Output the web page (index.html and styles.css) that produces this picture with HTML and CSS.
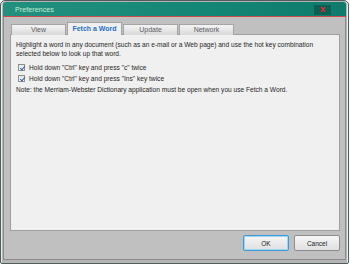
FILE: index.html
```html
<html>
  <head>
    <meta name="viewport" content="width=device-width,initial-scale=1">
    <link rel="stylesheet" href="styles.css">
  </head>

  <body>
    <div class="window">
      <div class="titlebar">
        <span class="title">Preferences</span>
        <span class="close">X</span>
      </div>

      <div class="frame">
        <div class="tabs">
          <div class="tab">View</div>
          <div class="tab active">Fetch a Word</div>
          <div class="tab">Update</div>
          <div class="tab">Network</div>
        </div>

        <div class="panel">
          <p class="intro">Highlight a word in any document (such as an e-mail or a Web page) and use the hot key combination selected below to look up that word.</p>
          <div class="option">
            <input type="checkbox" id="ctrl_c" checked>
            <label for="ctrl_c">Hold down "Ctrl" key and press "c" twice</label>
          </div>
          <div class="option">
            <input type="checkbox" id="ctrl_ins" checked>
            <label for="ctrl_ins">Hold down "Ctrl" key and press "Ins" key twice</label>
          </div>
          <p class="note">Note: the Merriam-Webster Dictionary application must be open when you use Fetch a Word.</p>
        </div>

        <div class="actions">
          <button class="btn default">OK</button>
          <button class="btn">Cancel</button>
        </div>
      </div>
    </div>
  </body>
</html>
```

FILE: styles.css
```css
body {
    margin: 0;
    background: #ffffff;
    font-family: 'Liberation Sans', Arial, sans-serif;
}

.window {
    width: 349px;
    height: 264px;
    box-sizing: border-box;
    border: 1px solid #505c5c;
    border-radius: 5px 5px 2px 2px;
    background: #b4b4b4;
    padding: 1px 2px 3px 2px;
    display: flex;
    flex-direction: column;
    box-shadow: inset 1px 0 0 #e8eeee, inset -1px 0 0 #e8eeee;
}

.titlebar {
    height: 14px;
    display: flex;
    align-items: center;
    justify-content: space-between;
    padding: 0 15px 0 12px;
    background: linear-gradient(to right, #23907e, #148676 60%, #0f7a6c);
    border-bottom: 1px solid #d24b4b;
    border-radius: 3px 3px 0 0;
}

.title {
    font-size: 7px;
    color: #c6efd6;
    letter-spacing: 0.1px;
}

.close {
    width: 17px;
    height: 10px;
    margin-top: 1px;
    background: #0c5f55;
    color: #ff2020;
    font-size: 8px;
    font-weight: bold;
    line-height: 10px;
    text-align: center;
}

.frame {
    flex: 1;
    display: flex;
    flex-direction: column;
    background: #c0c0c0;
    border: 1px solid #8c8c8c;
    border-top: none;
    padding: 6px 5px 0 6px;
}

.tabs {
    display: flex;
    gap: 1px;
    padding-left: 1px;
    align-items: flex-end;
    height: 12px;
    margin-bottom: -1px;
    position: relative;
    z-index: 1;
}

.tab {
    width: 55px;
    height: 11px;
    box-sizing: border-box;
    border: 1px solid #a4a4a4;
    border-bottom: none;
    background: linear-gradient(#f4f4f4, #d9d9d9);
    color: #5c5c5c;
    font-size: 7px;
    line-height: 10px;
    text-align: center;
}

.tab.active {
    height: 13px;
    background: #f0f0f0;
    color: #1f6fc4;
    font-weight: bold;
    line-height: 12px;
}

.panel {
    height: 197px;
    box-sizing: border-box;
    background: #f0f0f0;
    border: 1px solid #9e9e9e;
    padding: 6px 5px;
    font-size: 6.6px;
    color: #262626;
}

.intro {
    margin: 0 0 4px;
    line-height: 8.5px;
}

.option {
    display: flex;
    align-items: center;
    height: 11px;
    padding-left: 2px;
}

.option input {
    appearance: none;
    -webkit-appearance: none;
    position: relative;
    width: 7px;
    height: 7px;
    margin: 0 4px 0 0;
    border: 1px solid #8f8f8f;
    background: linear-gradient(#e4e4e4, #ffffff);
}

/* blue tick */
.option input:checked::after {
    content: "";
    position: absolute;
    left: 2px;
    top: 0px;
    width: 2px;
    height: 4px;
    border: solid #2b5fa8;
    border-width: 0 1px 1px 0;
    transform: rotate(40deg);
}

.note {
    margin: 0;
    line-height: 11px;
}

.actions {
    display: flex;
    justify-content: flex-end;
    gap: 5px;
    padding-top: 4px;
}

.btn {
    width: 46px;
    height: 16px;
    padding: 0;
    border: 1px solid #8d8d8d;
    border-radius: 2px;
    background: linear-gradient(#f6f6f6, #e0e0e0);
    font-family: 'Liberation Sans', Arial, sans-serif;
    font-size: 6.5px;
    color: #1c1c1c;
}

.btn.default {
    border-color: #3c9ad8;
    box-shadow: inset 0 0 0 1px #9fd6f3;
}
```
